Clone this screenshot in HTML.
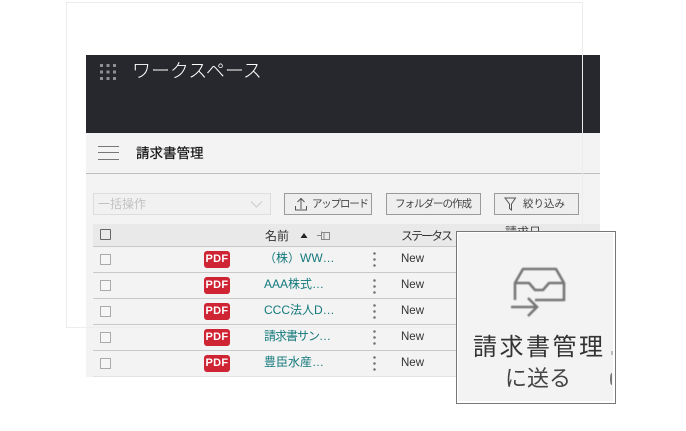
<!DOCTYPE html>
<html><head><meta charset="utf-8">
<style>
html,body{margin:0;padding:0;background:#fff}
body{position:relative;width:686px;height:431px;overflow:hidden;font-family:"Liberation Sans","Noto Sans CJK JP",sans-serif;color:#333}
.a{position:absolute;box-sizing:border-box}
.t{position:absolute;white-space:nowrap;line-height:1}
.btn{position:absolute;box-sizing:border-box;top:193px;height:22px;border:1px solid #9a9a9a;background:#eee;font-size:10.5px;color:#444;line-height:21px;white-space:nowrap}
.cb{position:absolute;left:100px;width:11px;height:11px;box-sizing:border-box;border:1px solid #aaa;background:#f6f6f6}
.pdf{position:absolute;left:204px;width:26px;height:17px;background:#cf2433;border-radius:3px;color:#fff;font-weight:bold;font-size:11px;line-height:17px;text-align:center;letter-spacing:.3px}
.ln{position:absolute;left:93px;width:363px;height:1px;background:#c9c9c9}
.nm{position:absolute;left:264px;font-size:12px;line-height:13px;color:#14797c;white-space:nowrap}
.nw{position:absolute;left:401px;font-size:11.500px;line-height:13px;color:#333}
.dots{position:absolute;left:373px;width:3px;height:15px;background:radial-gradient(circle at 1.5px 1.5px,#777 1.1px,transparent 1.5px) 0 0/3px 6px repeat-y}
</style></head>
<body>
<div class="a" style="left:86px;top:55px;width:514px;height:78px;background:#27282d"></div>
<div class="a" style="left:86px;top:133px;width:514px;height:244px;background:#f3f3f3"></div>
<div class="a" style="left:86px;top:173px;width:514px;height:1px;background:#bdbdbd"></div>
<svg class="a" style="left:100px;top:64px" width="18" height="17"><g fill="#8f9094"><rect x="0" y="0" width="3" height="3"/><rect x="6.500" y="0" width="3" height="3"/><rect x="13" y="0" width="3" height="3"/><rect x="0" y="6.500" width="3" height="3"/><rect x="6.500" y="6.500" width="3" height="3"/><rect x="13" y="6.500" width="3" height="3"/><rect x="0" y="13" width="3" height="3"/><rect x="6.500" y="13" width="3" height="3"/><rect x="13" y="13" width="3" height="3"/></g></svg>
<div class="t" style="left:132px;top:62px;font-size:19px;letter-spacing:-.05px;color:#fff;font-weight:300">ワークスペース</div>
<div class="a" style="left:98px;top:146px;width:21px;height:1px;background:#777"></div>
<div class="a" style="left:98px;top:152px;width:21px;height:1px;background:#777"></div>
<div class="a" style="left:98px;top:159px;width:21px;height:1px;background:#777"></div>
<div class="t" style="left:136px;top:147px;font-size:13.500px;color:#111;-webkit-text-stroke:.2px #111">請求書管理</div>

<div class="a" style="left:93px;top:193px;width:178px;height:22px;border:1px solid #ddd;background:#f1f1f1"></div>
<div class="t" style="left:98px;top:198px;font-size:12px;color:#c2c2c2">一括操作</div>
<svg class="a" style="left:250px;top:200px" width="14" height="9"><path d="M1 1.500L6.500 7L12 1.500" fill="none" stroke="#ccc" stroke-width="1"/></svg>

<div class="btn" style="left:284px;width:88px;padding-left:27px"><span style="letter-spacing:-1.2px">アップロード</span></div>
<svg class="a" style="left:294px;top:196px" width="15" height="16"><path d="M7 13V3M3.500 6L7 2.500L10.500 6M1.500 10V14H12.500V10" fill="none" stroke="#555" stroke-width="1"/></svg>
<div class="btn" style="left:386px;width:95px;padding-left:8px"><span style="letter-spacing:-1px">フォルダーの作成</span></div>
<div class="btn" style="left:494px;width:85px;padding-left:28px">絞り込み</div>
<svg class="a" style="left:504px;top:197px" width="13" height="15"><path d="M1 1H11.500L7.500 7V13L5.500 11.500V7Z" fill="none" stroke="#555" stroke-width="1"/></svg>

<div class="a" style="left:93px;top:224px;width:507px;height:22px;background:#e9e9e9"></div>
<div class="a" style="left:100px;top:229px;width:11px;height:11px;border:1px solid #666;border-radius:1px"></div>
<div class="t" style="left:265px;top:230px;font-size:12px;color:#333">名前</div>
<svg class="a" style="left:300px;top:232px" width="8" height="7"><path d="M4 1L7.500 6H.5Z" fill="#222"/></svg>
<svg class="a" style="left:316px;top:229px" width="15" height="14"><path d="M1 6.500H5M5.500 2.500V11M5.500 3.500H13.500V10.500H5.500M8 3.500V10.500" fill="none" stroke="#888" stroke-width="1"/></svg>
<div class="t" style="left:401px;top:230px;font-size:12px;color:#333;letter-spacing:-2px">ステータス</div>
<div class="t" style="left:505px;top:226px;font-size:12px;color:#444">請求日</div>

<div class="ln" style="top:246px"></div><div class="ln" style="top:272px"></div><div class="ln" style="top:298px"></div><div class="ln" style="top:324px"></div><div class="ln" style="top:350px"></div><div class="ln" style="top:376px;background:#e2e2e2"></div>

<div class="cb" style="top:254px"></div><div class="pdf" style="top:251px">PDF</div><div class="nm" style="top:252px">（株）WW…</div><div class="dots" style="top:252px"></div><div class="nw" style="top:253px">New</div>
<div class="cb" style="top:280px"></div><div class="pdf" style="top:277px">PDF</div><div class="nm" style="top:278px">AAA株式…</div><div class="dots" style="top:279px"></div><div class="nw" style="top:279px">New</div>
<div class="cb" style="top:306px"></div><div class="pdf" style="top:303px">PDF</div><div class="nm" style="top:304px">CCC法人D…</div><div class="dots" style="top:304px"></div><div class="nw" style="top:305px">New</div>
<div class="cb" style="top:332px"></div><div class="pdf" style="top:329px">PDF</div><div class="nm" style="top:330px;letter-spacing:-1px">請求書サン…</div><div class="dots" style="top:330px"></div><div class="nw" style="top:331px">New</div>
<div class="cb" style="top:358px"></div><div class="pdf" style="top:355px">PDF</div><div class="nm" style="top:356px">豊臣水産…</div><div class="dots" style="top:356px"></div><div class="nw" style="top:357px">New</div>

<div class="a" style="left:66px;top:2px;width:517px;height:326px;border:1px solid #ececec"></div>

<div class="a" style="left:456px;top:231px;width:160px;height:173px;background:#f3f3f3;border:1px solid #777;box-shadow:inset -2px -2px 0 #fff,inset 1px 1px 0 #fff"></div>
<svg class="a" style="left:508px;top:264px;filter:blur(.4px)" width="60" height="54"><path d="M7 36V19L15 5H48L56 19V36H27M7 19H21L27 26H35L41 19H56" fill="none" stroke="#777" stroke-width="2.600" stroke-linejoin="round"/><path d="M3 43H28M20 34L29 43L20 52" fill="none" stroke="#777" stroke-width="2.600"/></svg>
<div class="t" style="left:473px;top:336px;font-size:24px;letter-spacing:2.500px;color:#333;filter:blur(.3px)">請求書管理</div>
<div class="t" style="left:505px;top:368px;font-size:22px;color:#444;filter:blur(.3px)">に送る</div>
<div class="a" style="left:611px;top:351px;width:2px;height:4px;background:#bbb"></div>
<div class="a" style="left:610px;top:373px;width:3px;height:12px;border-left:2px solid #777;border-radius:50%"></div>
</body></html>
